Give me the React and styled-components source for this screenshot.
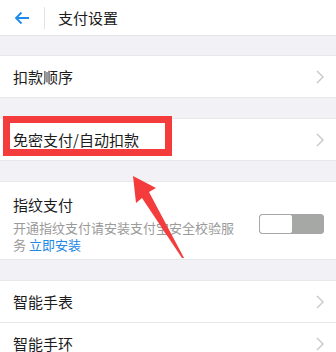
import React from 'react';
import styled, { createGlobalStyle } from 'styled-components';

const GlobalStyle = createGlobalStyle`
  html, body {
    margin: 0;
    padding: 0;
    background: #f2f2f6;
    overflow: hidden;
  }
  body {
    font-family: "Noto Sans CJK SC", "Noto Sans", sans-serif;
    -webkit-font-smoothing: antialiased;
  }
`;

const Page = styled.div`
  position: relative;
  width: 336px;
  height: 352px;
  overflow: hidden;
  background: #f2f2f6;
`;

const Header = styled.div`
  display: flex;
  align-items: center;
  height: 35px;
  background: #fff;
  border-bottom: 1px solid #e4e4e7;
`;

const BackButton = styled.div`
  width: 44px;
  display: flex;
  justify-content: center;
  align-items: center;
  color: #1b8bec;
`;

const Divider = styled.div`
  width: 1px;
  height: 22px;
  background: #e2e2e2;
`;

const Title = styled.div`
  margin-left: 13px;
  font-size: 15px;
  color: #1c1c1c;
  line-height: 20px;
`;

const Group = styled.div`
  margin-top: ${(p) => p.gap || 20}px;
  background: #fff;
  border-top: 1px solid #e8e8eb;
  border-bottom: 1px solid #e8e8eb;
`;

const Row = styled.div`
  display: flex;
  align-items: center;
  justify-content: space-between;
  height: 41px;
  padding: 0 12px 0 13px;
  & + & {
    border-top: 1px solid #e8e8eb;
  }
`;

const Label = styled.div`
  font-size: 15px;
  color: #1c1c1c;
  line-height: 20px;
`;

const Chevron = () => (
  <svg width="8" height="14" viewBox="0 0 8 14">
    <path d="M1 1 L7 7 L1 13" fill="none" stroke="#c7c7cc" strokeWidth="1.4" />
  </svg>
);

const FingerRow = styled.div`
  display: flex;
  align-items: center;
  justify-content: space-between;
  padding: 13px 12px 6px 13px;
`;

const FingerText = styled.div`
  width: 232px;
`;

const Sub = styled.div`
  margin-top: 4px;
  font-size: 13px;
  line-height: 17px;
  color: #9a9a9a;
`;

const Link = styled.span`
  color: #1e88e5;
`;

const Toggle = styled.div`
  display: flex;
  width: 63px;
  height: 18px;
  border: 1px solid #a6a8a5;
  border-radius: 3px;
  overflow: hidden;
  background: #a6a8a5;
`;

const Knob = styled.div`
  width: 32px;
  background: #fff;
  border-radius: 2px;
`;

const Highlight = styled.div`
  position: absolute;
  left: 3px;
  top: 116px;
  width: 155px;
  height: 26px;
  border: 7px solid #f43c3c;
`;

const Pointer = styled.svg`
  position: absolute;
  left: 0;
  top: 0;
`;

export default function App() {
  return (
    <Page>
      <GlobalStyle />
      <Header>
        <BackButton>
          <svg width="16" height="14" viewBox="0 0 16 14">
            <path d="M15 7 H2 M7.5 1.5 L2 7 L7.5 12.5" fill="none" stroke="#1b8bec" strokeWidth="1.8" />
          </svg>
        </BackButton>
        <Divider />
        <Title>支付设置</Title>
      </Header>
      <Group gap={19}>
        <Row>
          <Label>扣款顺序</Label>
          <Chevron />
        </Row>
      </Group>
      <Group>
        <Row>
          <Label>免密支付/自动扣款</Label>
          <Chevron />
        </Row>
      </Group>
      <Group>
        <FingerRow>
          <FingerText>
            <Label>指纹支付</Label>
            <Sub>
              开通指纹支付请安装支付宝安全校验服务 <Link>立即安装</Link>
            </Sub>
          </FingerText>
          <Toggle>
            <Knob />
          </Toggle>
        </FingerRow>
      </Group>
      <Group>
        <Row>
          <Label>智能手表</Label>
          <Chevron />
        </Row>
        <Row>
          <Label>智能手环</Label>
          <Chevron />
        </Row>
      </Group>
      <Highlight />
      <Pointer width="336" height="352" viewBox="0 0 336 352">
        <polygon points="133,176 156,188 149,192 184,258 182,258 142,198 136,203" fill="#f43c3c" />
      </Pointer>
    </Page>
  );
}
